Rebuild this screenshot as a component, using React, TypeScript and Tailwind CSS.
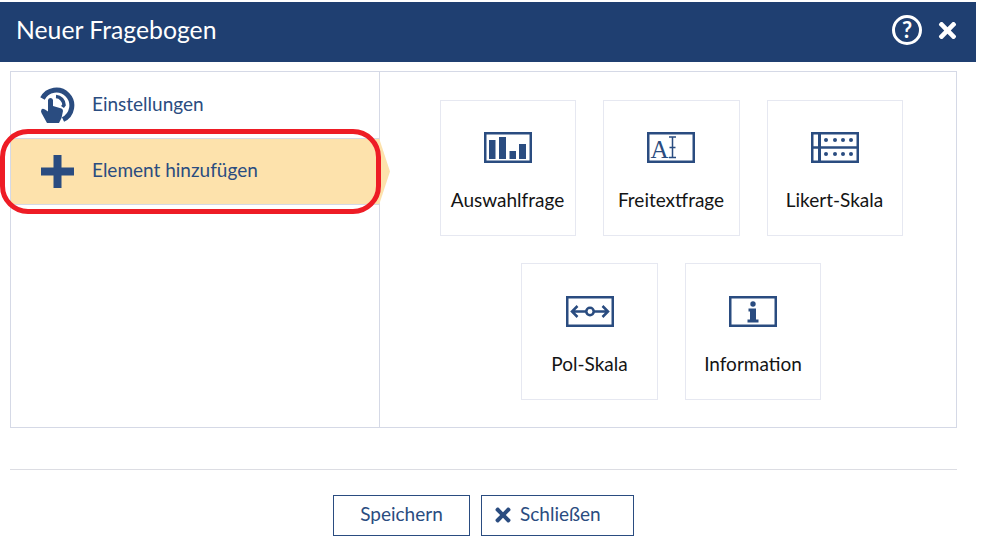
import { FaTimes } from "react-icons/fa";

const iconBlue = "#2a4c80";

function Frame({ children }: { children?: React.ReactNode }) {
  return (
    <svg width="48" height="31" viewBox="0 0 48 31" fill={iconBlue}>
      <rect x="1.25" y="1.25" width="45.5" height="28.5" fill="none" stroke={iconBlue} strokeWidth="2.5" />
      {children}
    </svg>
  );
}

function ChoiceIcon() {
  return (
    <Frame>
      <rect x="5" y="8" width="6.5" height="19" />
      <rect x="15" y="5" width="7" height="22" />
      <rect x="25.5" y="19" width="6.5" height="8" />
      <rect x="35" y="12" width="7" height="15" />
    </Frame>
  );
}

function TextIcon() {
  return (
    <Frame>
      <text x="3.5" y="26" fontFamily="'Liberation Serif', serif" fontSize="25" fill={iconBlue}>
        A
      </text>
      <path d="M22 5h7M25.5 5v20.5M22 25.5h7M22.5 15.5h6" fill="none" stroke={iconBlue} strokeWidth="1.5" />
    </Frame>
  );
}

function LikertIcon() {
  return (
    <Frame>
      <path d="M1 15.5h46" stroke={iconBlue} strokeWidth="2.5" fill="none" />
      <path d="M8.5 1v29" stroke={iconBlue} strokeWidth="3" fill="none" />
      {[15, 24, 32, 40].map((x) => (
        <g key={x}>
          <circle cx={x} cy="8" r="2" />
          <circle cx={x} cy="22" r="2" />
        </g>
      ))}
    </Frame>
  );
}

function PolIcon() {
  return (
    <Frame>
      <path
        d="M6 15.5h14.5M27.5 15.5H42M11.5 10l-5.5 5.5 5.5 5.5M36.5 10l5.5 5.5-5.5 5.5"
        fill="none"
        stroke={iconBlue}
        strokeWidth="2.5"
      />
      <circle cx="24" cy="15.5" r="3.7" fill="none" stroke={iconBlue} strokeWidth="2.5" />
    </Frame>
  );
}

function InfoIcon() {
  return (
    <Frame>
      <circle cx="24" cy="8" r="2.7" />
      <path d="M19.5 12.5h7.5v11h2.5v3h-11v-3h2.5v-8h-1.5z" />
    </Frame>
  );
}

function HandIcon() {
  return (
    <svg width="36" height="36" viewBox="0 0 36 36" fill={iconBlue}>
      <path d="M3.5 11.5A15.5 15.5 0 1 1 24 32.500" fill="none" stroke={iconBlue} strokeWidth="5" />
      <path d="M17 9.5A8.5 8.5 0 0 1 25 18l-1.5 2" fill="none" stroke={iconBlue} strokeWidth="3.6" />
      <path d="M9 13a2.6 2.6 0 0 1 5 0v6l8.5 2.5q1.5 .5 1.5 2.5l-1.5 7-2.5 5H8L2.5 26q-1-2 0-3.5t3.500 0l3 2z" />
    </svg>
  );
}

function Tile({ label, size, children }: { label: string; size: string; children: React.ReactNode }) {
  return (
    <div className={`flex flex-col items-center border border-[#e6e8f1] ${size}`}>
      {children}
      <span className="mt-[24px] text-[19px] leading-[26px] text-[#141414]">{label}</span>
    </div>
  );
}

export default function App() {
  return (
    <div
      className="relative h-[553px] w-[984px] overflow-hidden bg-white pt-[2px]"
      style={{ fontFamily: "Lato, 'Open Sans', sans-serif" }}
    >
      {/* Header */}
      <header className="flex h-[60px] w-[976px] items-center justify-between bg-[#1f3f71] pb-[4px] pl-[16px] pr-[16px] text-white">
        <h1 className="text-[24.75px] font-normal leading-none">Neuer Fragebogen</h1>
        <div className="flex items-center gap-[13px]">
          <span className="flex h-[30px] w-[30px] items-center justify-center rounded-full border-[3px] border-white text-[22px] font-bold leading-none">
            ?
          </span>
          <FaTimes className="text-[25px]" />
        </div>
      </header>

      {/* Panel */}
      <div className="mx-[10px] mt-[9px] flex h-[357px] w-[947px] border border-[#d5d9e6]">
        <nav className="w-[369px] shrink-0 border-r border-[#d5d9e6] text-[19px] text-[#2a4c80]">
          <div className="flex h-[66px] items-center gap-[17px] pl-[28px]">
            <HandIcon />
            <span className="-translate-y-[1px]">Einstellungen</span>
          </div>
          <div className="relative flex h-[67px] w-[368px] items-center gap-[18px] border-y border-[#d5d9e6] bg-[#fde2ac] pl-[30px]">
            <svg width="33" height="33" viewBox="0 0 33 33" fill={iconBlue}>
              <path d="M12.5 0h8v12.5H33v8H20.5V33h-8V20.5H0v-8h12.5z" />
            </svg>
            <span className="-translate-y-[1px]">Element hinzufügen</span>
            <span className="absolute left-full top-[-1px] h-[67px] w-[11px] bg-[#fde2ac] [clip-path:polygon(0_0,100%_50%,0_100%)]" />
          </div>
        </nav>

        <section className="flex flex-1 flex-col items-center gap-[27px] pl-[6px] pt-[28px]">
          <div className="flex gap-[27px]">
            <Tile label="Auswahlfrage" size="h-[136px] w-[136px] pt-[31px]">
              <ChoiceIcon />
            </Tile>
            <Tile label="Freitextfrage" size="h-[136px] w-[137px] pt-[31px]">
              <TextIcon />
            </Tile>
            <Tile label="Likert-Skala" size="h-[136px] w-[136px] pt-[31px]">
              <LikertIcon />
            </Tile>
          </div>
          <div className="flex gap-[27px]">
            <Tile label="Pol-Skala" size="h-[137px] w-[137px] pt-[32px]">
              <PolIcon />
            </Tile>
            <Tile label="Information" size="h-[137px] w-[136px] pt-[32px]">
              <InfoIcon />
            </Tile>
          </div>
        </section>
      </div>

      {/* Footer */}
      <div className="mx-[10px] mt-[41px] w-[947px] border-t border-[#dcdde3] pl-[323px] pt-[25px]">
        <div className="flex gap-[11px] text-[19px] text-[#2a4c80]">
          <button className="h-[41px] w-[137px] border border-[#2a4c80] pb-[2px]">Speichern</button>
          <button className="flex h-[41px] w-[153px] items-center gap-[6px] border border-[#2a4c80] pb-[2px] pl-[10px]">
            <FaTimes className="text-[22px]" />
            Schließen
          </button>
        </div>
      </div>

      {/* Red annotation */}
      <div className="absolute left-0 top-[129px] h-[85px] w-[381px] rounded-[28px] border-[5px] border-[#ee1c25]" />
    </div>
  );
}
